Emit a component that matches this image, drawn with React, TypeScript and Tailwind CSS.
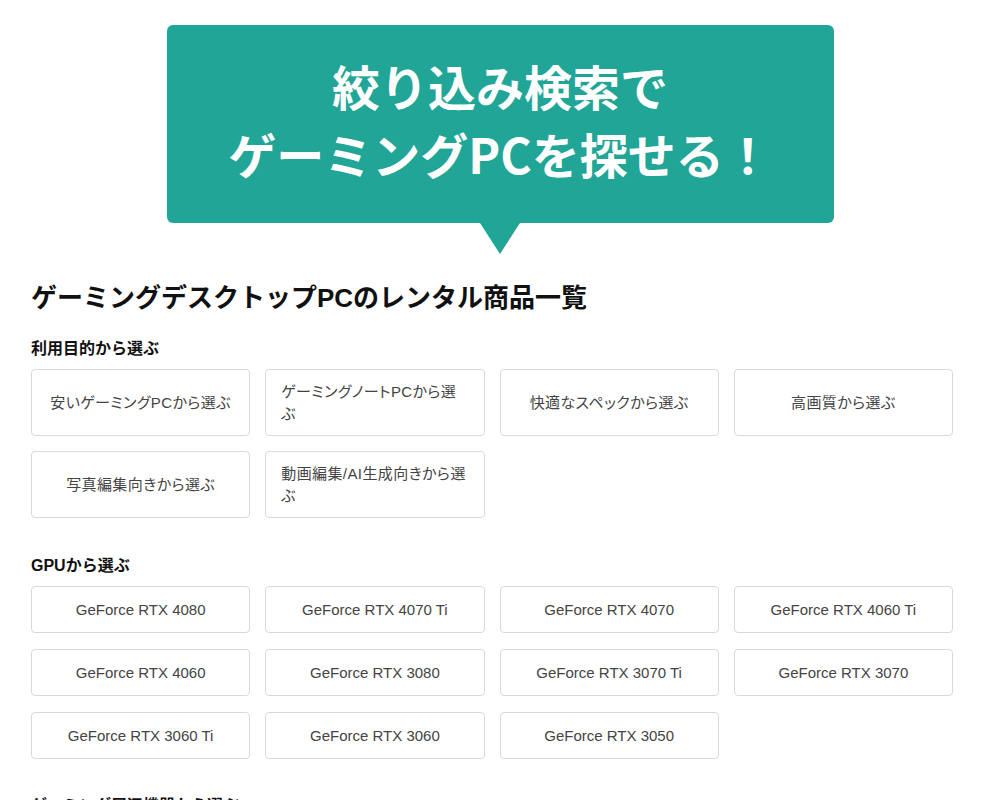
import React from 'react';

const purposes = [
  '安いゲーミングPCから選ぶ',
  'ゲーミングノートPCから選ぶ',
  '快適なスペックから選ぶ',
  '高画質から選ぶ',
  '写真編集向きから選ぶ',
  '動画編集/AI生成向きから選ぶ',
];

const gpus = [
  'GeForce RTX 4080',
  'GeForce RTX 4070 Ti',
  'GeForce RTX 4070',
  'GeForce RTX 4060 Ti',
  'GeForce RTX 4060',
  'GeForce RTX 3080',
  'GeForce RTX 3070 Ti',
  'GeForce RTX 3070',
  'GeForce RTX 3060 Ti',
  'GeForce RTX 3060',
  'GeForce RTX 3050',
];

const FilterButton = ({ label, tall }: { label: string; tall?: boolean }) => (
  <a
    href="#"
    className={`flex items-center justify-center rounded-[4px] border border-[#d9d9d9] bg-white px-[15px] text-[15px] leading-[22px] text-[#444] ${
      tall ? "h-[67px] tracking-[0.4px] [font-feature-settings:'palt']" : 'h-[47px]'
    }`}
  >
    <span>{label}</span>
  </a>
);

const App: React.FC = () => {
  return (
    <div className="min-h-[800px] w-[1000px] overflow-hidden bg-white font-['Liberation_Sans','Noto_Sans_CJK_JP',sans-serif] text-[#111]">
      {/* banner */}
      <div className="flex justify-center pt-[25px]">
        <div className="relative flex h-[198px] w-[667px] flex-col items-center justify-center rounded-[6px] bg-[#21a597] pb-[10px] font-['Noto_Sans_CJK_JP',sans-serif] text-[48px] font-bold leading-[68px] text-white">
          <p>絞り込み検索で</p>
          <p>ゲーミングPCを探せる！</p>
          <div className="absolute left-1/2 top-full -translate-x-1/2 border-x-[20px] border-t-[31px] border-x-transparent border-t-[#21a597]" />
        </div>
      </div>

      <div className="w-[953px] pl-[31px]">
        <h2 className="mt-[57px] text-[26px] font-bold leading-[36px]">
          ゲーミングデスクトップPCのレンタル商品一覧
        </h2>

        <section className="mt-[22px]">
          <h3 className="mb-[9px] text-[16px] font-bold leading-[22px]">利用目的から選ぶ</h3>
          <div className="grid grid-cols-4 gap-x-[15px] gap-y-[15px]">
            {purposes.map((p) => (
              <FilterButton key={p} label={p} tall />
            ))}
          </div>
        </section>

        <section className="mt-[37px]">
          <h3 className="mb-[9px] text-[16px] font-bold leading-[22px]">GPUから選ぶ</h3>
          <div className="grid grid-cols-4 gap-x-[15px] gap-y-[16px]">
            {gpus.map((g) => (
              <FilterButton key={g} label={g} />
            ))}
          </div>
        </section>

        <section className="mt-[36px]">
          <h3 className="mb-[10px] text-[16px] font-bold leading-[22px]">ゲーミング周辺機器から選ぶ</h3>
        </section>
      </div>
    </div>
  );
};

export default App;
